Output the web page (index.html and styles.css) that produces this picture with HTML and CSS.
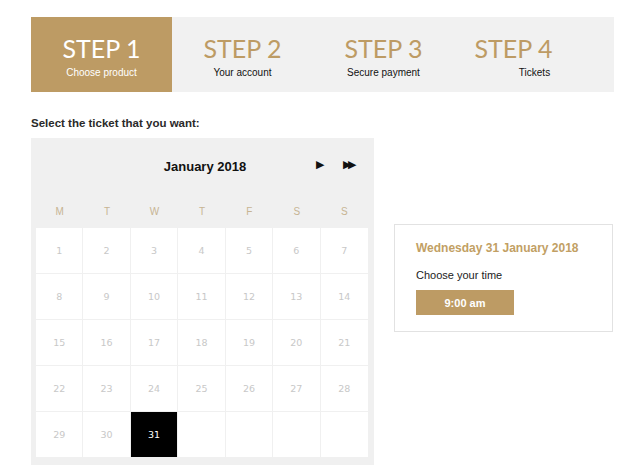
FILE: index.html
```html
<!DOCTYPE html>
<html lang="en">
<head>
  <meta charset="UTF-8">
  <meta name="viewport" content="width=device-width, initial-scale=1.0">
  <title>Tickets</title>
  <link rel="stylesheet" href="styles.css">
</head>
<body>
  <div class="page">
    <div class="steps">
      <div class="step active">
        <div class="step-title">STEP 1</div>
        <div class="step-sub">Choose product</div>
      </div>
      <div class="step">
        <div class="step-title">STEP 2</div>
        <div class="step-sub">Your account</div>
      </div>
      <div class="step">
        <div class="step-title">STEP 3</div>
        <div class="step-sub">Secure payment</div>
      </div>
      <div class="step step-last">
        <div class="step-title">STEP 4</div>
        <div class="step-sub">Tickets</div>
      </div>
    </div>

    <p class="intro">Select the ticket that you want:</p>

    <div class="main">
      <div class="calendar">
        <div class="cal-head">
          <span class="month">January 2018</span>
          <span class="nav nav-next">&#9654;</span>
          <span class="nav nav-last">&#9654;&#9654;</span>
        </div>
        <div class="weekdays">
          <span>M</span><span>T</span><span>W</span><span>T</span><span>F</span><span>S</span><span>S</span>
        </div>
        <div class="days">
          <span>1</span><span>2</span><span>3</span><span>4</span><span>5</span><span>6</span><span>7</span>
          <span>8</span><span>9</span><span>10</span><span>11</span><span>12</span><span>13</span><span>14</span>
          <span>15</span><span>16</span><span>17</span><span>18</span><span>19</span><span>20</span><span>21</span>
          <span>22</span><span>23</span><span>24</span><span>25</span><span>26</span><span>27</span><span>28</span>
          <span>29</span><span>30</span><span class="selected">31</span><span></span><span></span><span></span><span></span>
        </div>
      </div>

      <div class="times">
        <div class="times-date">Wednesday 31 January 2018</div>
        <div class="times-label">Choose your time</div>
        <button class="time-btn">9:00 am</button>
      </div>
    </div>
  </div>
</body>
</html>
```

FILE: styles.css
```css
body {
  margin: 0;
  padding: 0;
  font-family: "Liberation Sans", Arial, sans-serif;
  background: #fff;
  color: #222;
}

.page {
  padding: 17px 0 0 31px;
}

.steps {
  display: flex;
  width: 583px;
  height: 75px;
  background: #f1f1f1;
}

.step {
  width: 141px;
  display: flex;
  flex-direction: column;
  align-items: center;
  padding-top: 18px;
  box-sizing: border-box;
}

.step-title {
  font-family: "Lato", "Open Sans", sans-serif;
  font-size: 25px;
  line-height: 26px;
  color: #bd9b64;
}

.step-sub {
  font-size: 10px;
  margin-top: 6px;
  color: #111;
}

.step.active {
  background: #bd9b64;
}

.step.active .step-title,
.step.active .step-sub {
  color: #fff;
}

.step-last .step-title {
  margin-right: 22px;
}

.step-last .step-sub {
  margin-left: 20px;
}

.intro {
  margin: 25px 0 9px;
  font-size: 11.5px;
  font-weight: bold;
  color: #2a2a2a;
}

.main {
  display: flex;
  align-items: flex-start;
}

.calendar {
  width: 343px;
  background: #f0f0f0;
  padding: 0 6px 7px 5px;
  box-sizing: border-box;
}

.cal-head {
  height: 56px;
  display: flex;
  align-items: center;
  position: relative;
  justify-content: center;
}

.month {
  font-size: 13px;
  font-weight: bold;
  color: #111;
  margin-left: 6px;
}

.nav {
  position: absolute;
  font-size: 11px;
  color: #111;
  top: 20px;
}

.nav-next {
  left: 280px;
}

.nav-last {
  left: 307px;
  letter-spacing: -3px;
}

.weekdays {
  display: grid;
  grid-template-columns: repeat(7, 1fr);
  height: 34px;
  align-items: center;
  font-size: 10px;
  color: #c7b493;
  text-align: center;
}

.days {
  display: grid;
  grid-template-columns: repeat(7, 1fr);
  grid-auto-rows: 46px;
  background: #fff;
}

.days span {
  display: flex;
  align-items: center;
  justify-content: center;
  font-family: "DejaVu Sans", Verdana, sans-serif;
  font-size: 9.5px;
  color: #c8c8c8;
  border-right: 1px solid #f0f0f0;
  border-bottom: 1px solid #f0f0f0;
}

.days span:nth-child(7n) {
  border-right: none;
}

.days span.selected {
  background: #000;
  color: #fff;
}

.times {
  width: 219px;
  margin: 86px 0 0 20px;
  border: 1px solid #e2e2e2;
  box-sizing: border-box;
  padding: 16px 21px 16px;
}

.times-date {
  font-size: 12px;
  font-weight: bold;
  color: #c29f64;
}

.times-label {
  font-size: 11px;
  color: #222;
  margin-top: 14px;
}

.time-btn {
  display: block;
  margin-top: 9px;
  width: 98px;
  height: 25px;
  border: none;
  background: #bd9b64;
  color: #fff;
  font-family: "Liberation Sans", Arial, sans-serif;
  font-size: 11px;
  font-weight: bold;
  cursor: pointer;
}
```
